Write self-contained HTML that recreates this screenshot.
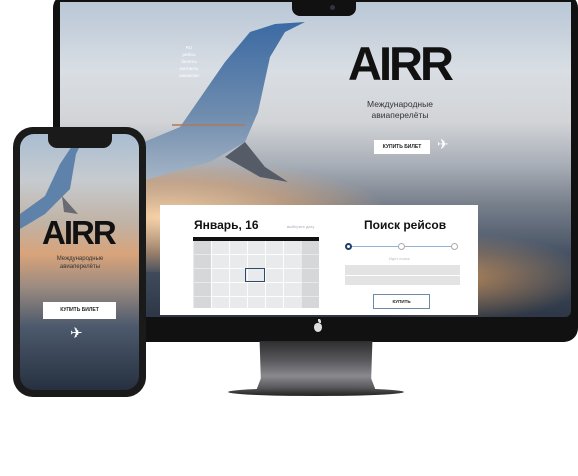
<!DOCTYPE html>
<html><head><meta charset="utf-8"><style>
*{margin:0;padding:0;box-sizing:border-box}
body{width:578px;height:476px;background:#fff;position:relative;overflow:hidden;font-family:"Liberation Sans",sans-serif}
.abs{position:absolute}
.mon{left:53px;top:-6px;width:525px;height:348px;background:#111;border-radius:14px}
.scr{left:60px;top:2px;width:511px;height:315px;overflow:hidden;border-radius:0 0 6px 6px;
background:linear-gradient(180deg,#b9c7d6 0%,#d9dee4 22%,#d2d4d7 38%,#a7adb6 52%,#78808c 64%,#465264 80%,#2d3746 100%)}
.glow{left:-40px;top:160px;width:360px;height:110px;background:radial-gradient(ellipse at 40% 50%,rgba(255,215,170,.95),rgba(240,175,115,.5) 45%,rgba(0,0,0,0) 75%)}
.glow2{left:330px;top:230px;width:200px;height:90px;background:radial-gradient(ellipse at 30% 50%,rgba(230,160,90,.7),rgba(0,0,0,0) 70%)}
.panel{left:160px;top:205px;width:318px;height:110px;background:#fff}
.btn{background:#fff;color:#222;font-size:5px;font-weight:bold;text-align:center}
.cal{left:193px;top:237px;width:126px;height:71px;background:#e9eaeb;
background-image:linear-gradient(90deg,rgba(255,255,255,.9) 1px,transparent 1px),linear-gradient(0deg,rgba(255,255,255,.9) 1px,transparent 1px);background-size:18px 14px;background-position:0 4px}
.cal div{position:absolute}
</style></head><body>
<div class="abs mon"></div>
<div class="abs scr">
 <div class="abs glow"></div><div class="abs glow2"></div>
 <svg class="abs" style="left:0;top:0" width="511" height="315">
  <defs><linearGradient id="w" x1="0" y1="0" x2="0" y2="1"><stop offset="0" stop-color="#3b6aa3"/><stop offset=".5" stop-color="#6f8cae"/><stop offset="1" stop-color="#bcc5cf"/></linearGradient></defs>
  <path d="M-5 175 L60 150 L120 125 L165 60 L190 30 L215 22 L245 20 L225 30 L210 55 L198 110 L185 140 L150 160 L60 185 L-5 205Z" fill="url(#w)"/>
  <path d="M185 140 L205 165 L228 180 L200 175 L165 155Z" fill="#555c68"/>
  <path d="M112 123 L185 123" stroke="#b07a5a" stroke-width="1.5"/>
 </svg>
 <div class="abs" style="left:0;top:42px;width:258px;text-align:center;color:#fff;font-size:4.5px;line-height:7px">RU<br>рейсы<br>билеты<br>контакты<br>вакансии</div>
 <div class="abs" style="left:288px;top:38px;font-size:47px;font-weight:bold;letter-spacing:-3px;color:#111;line-height:47px">AIRR</div>
 <div class="abs" style="left:290px;top:97px;width:100px;text-align:center;font-size:8.5px;color:#333;line-height:11px">Международные<br>авиаперелёты</div>
 <div class="abs btn" style="left:314px;top:138px;width:56px;height:14px;line-height:14px">КУПИТЬ БИЛЕТ</div>
 <div class="abs" style="left:377px;top:134px;color:#fff;font-size:14px">✈</div>
</div>
<div class="abs" style="left:292px;top:0;width:64px;height:16px;background:#111;border-radius:0 0 8px 8px"></div>
<div class="abs" style="left:330px;top:5px;width:5px;height:5px;background:#334;border-radius:50%"></div>
<div class="abs panel"></div>
<div class="abs" style="left:194px;top:218px;font-size:12px;font-weight:bold;color:#111">Январь, 16</div>
<div class="abs" style="left:287px;top:224px;font-size:4px;color:#aab">выберите дату</div>
<div class="abs cal">
 <div style="left:0;top:0;width:126px;height:4px;background:#111"></div>
 <div style="left:0;top:4px;width:18px;height:67px;background:rgba(0,0,0,.08)"></div>
 <div style="left:108px;top:4px;width:18px;height:67px;background:rgba(0,0,0,.08)"></div>
 <div style="left:52px;top:31px;width:20px;height:14px;border:1.5px solid #2d4a6a"></div>
</div>
<div class="abs" style="left:364px;top:218px;font-size:12px;font-weight:bold;color:#111">Поиск рейсов</div>
<div class="abs" style="left:349px;top:246px;width:106px;height:1px;background:#8fb3d2"></div>
<div class="abs" style="left:345px;top:243px;width:7px;height:7px;border:2px solid #1e3f66;border-radius:50%;background:#fff"></div>
<div class="abs" style="left:398px;top:243px;width:7px;height:7px;border:1px solid #aaa;border-radius:50%;background:#fff"></div>
<div class="abs" style="left:451px;top:243px;width:7px;height:7px;border:1px solid #aaa;border-radius:50%;background:#fff"></div>
<div class="abs" style="left:389px;top:256px;font-size:4px;color:#bbb">Идет поиск</div>
<div class="abs" style="left:345px;top:265px;width:115px;height:20px;background:#e3e3e3"></div>
<div class="abs" style="left:345px;top:275px;width:115px;height:1px;background:#fff"></div>
<div class="abs btn" style="left:373px;top:294px;width:57px;height:15px;line-height:13px;border:1px solid #6d89a8;font-size:4.5px">КУПИТЬ</div>
<div class="abs" style="left:314px;top:323px;width:8px;height:9px;background:#ddd;border-radius:45% 45% 50% 50%"></div>
<div class="abs" style="left:318px;top:319px;width:3px;height:4px;background:#ddd;border-radius:0 60% 0 60%"></div>
<div class="abs" style="left:256px;top:341px;width:120px;height:50px;background:linear-gradient(180deg,#2e2e30,#5a5a5e 40%,#8a8a8e 70%,#4a4a4e);clip-path:polygon(3% 0,97% 0,96% 75%,100% 100%,0 100%,4% 75%)"></div>
<div class="abs" style="left:228px;top:388px;width:176px;height:8px;background:linear-gradient(180deg,#555,#222);border-radius:50%"></div>
<div class="abs" style="left:13px;top:127px;width:133px;height:270px;background:#1a1a1a;border-radius:20px"></div>
<div class="abs" style="left:20px;top:134px;width:119px;height:256px;border-radius:14px;overflow:hidden;background:linear-gradient(180deg,#a9bdd1 0%,#c6cbd0 18%,#c0b2a4 35%,#d8a37a 47%,#9a8a80 60%,#4d5a6d 75%,#263040 100%)">
 <svg class="abs" style="left:0;top:0" width="119" height="120"><path d="M0 80 L25 62 L40 30 L52 12 L62 8 L56 20 L50 55 L25 80 L0 95Z" fill="#5f82ab"/><path d="M42 62 L58 80 L44 78Z" fill="#6a6a72"/></svg>
 <div class="abs" style="left:22px;top:82px;font-size:33px;font-weight:bold;letter-spacing:-2px;color:#111;line-height:33px">AIRR</div>
 <div class="abs" style="left:20px;top:121px;width:80px;text-align:center;font-size:6px;color:#333;line-height:8px">Международные<br>авиаперелёты</div>
 <div class="abs btn" style="left:23px;top:168px;width:73px;height:17px;line-height:17px;font-size:5px">КУПИТЬ БИЛЕТ</div>
 <div class="abs" style="left:50px;top:190px;color:#fff;font-size:15px">✈</div>
</div>
<div class="abs" style="left:48px;top:134px;width:64px;height:14px;background:#1a1a1a;border-radius:0 0 9px 9px"></div>
</body></html>
